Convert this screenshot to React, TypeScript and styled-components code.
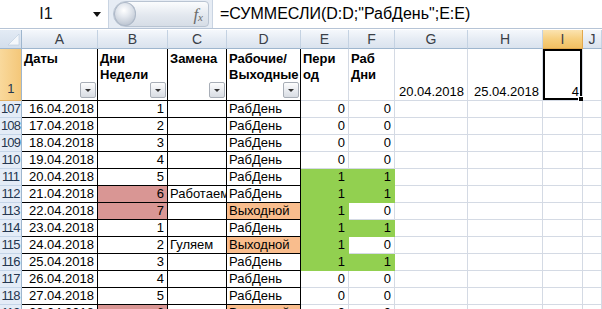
import styled, { createGlobalStyle } from 'styled-components';

const GlobalStyle = createGlobalStyle`
  body { margin: 0; background: #fff; }
`;

type Row = {
  n: number;
  date: string;
  day: number;
  note: string;
  kind: string;
  period: number;
  work: number;
};

const rows: Row[] = [
  { n: 107, date: '16.04.2018', day: 1, note: '', kind: 'РабДень', period: 0, work: 0 },
  { n: 108, date: '17.04.2018', day: 2, note: '', kind: 'РабДень', period: 0, work: 0 },
  { n: 109, date: '18.04.2018', day: 3, note: '', kind: 'РабДень', period: 0, work: 0 },
  { n: 110, date: '19.04.2018', day: 4, note: '', kind: 'РабДень', period: 0, work: 0 },
  { n: 111, date: '20.04.2018', day: 5, note: '', kind: 'РабДень', period: 1, work: 1 },
  { n: 112, date: '21.04.2018', day: 6, note: 'Работаем', kind: 'РабДень', period: 1, work: 1 },
  { n: 113, date: '22.04.2018', day: 7, note: '', kind: 'Выходной', period: 1, work: 0 },
  { n: 114, date: '23.04.2018', day: 1, note: '', kind: 'РабДень', period: 1, work: 1 },
  { n: 115, date: '24.04.2018', day: 2, note: 'Гуляем', kind: 'Выходной', period: 1, work: 0 },
  { n: 116, date: '25.04.2018', day: 3, note: '', kind: 'РабДень', period: 1, work: 1 },
  { n: 117, date: '26.04.2018', day: 4, note: '', kind: 'РабДень', period: 0, work: 0 },
  { n: 118, date: '27.04.2018', day: 5, note: '', kind: 'РабДень', period: 0, work: 0 },
  { n: 119, date: '28.04.2018', day: 6, note: '', kind: 'Выходной', period: 0, work: 0 },
];

const PINK = '#d99694';
const ORANGE = '#f9bd8d';
const GREEN = '#92d050';
const GRID = '#d4dae4';

const letters = ['A', 'B', 'C', 'D', 'E', 'F', 'G', 'H', 'I', 'J'];

export default function App() {
  return (
    <Window>
      <GlobalStyle />
      <FormulaBar>
        <NameBox>
          <span>I1</span>
          <Caret />
        </NameBox>
        <FxPill>
          <Knob />
          <Fx>
            f<sub>x</sub>
          </Fx>
        </FxPill>
        <FormulaInput>=СУММЕСЛИ(D:D;"РабДень";E:E)</FormulaInput>
      </FormulaBar>

      <Sheet>
        <Corner>
          <svg width="21" height="17" viewBox="0 0 21 17">
            <polygon points="19,4 19,15 8,15" fill="#f4f7fb" stroke="#b9c9dc" strokeWidth="0.6" />
          </svg>
        </Corner>
        {letters.map((l) => (
          <ColHead key={l} $selected={l === 'I'}>
            {l}
          </ColHead>
        ))}

        <RowHead $selected $tall>
          1
        </RowHead>
        <Cell $table $top $bold>
          Даты
          <FilterButton />
        </Cell>
        <Cell $table $top $bold>
          Дни
          <br />
          Недели
          <FilterButton />
        </Cell>
        <Cell $table $top $bold>
          Замена
          <FilterButton />
        </Cell>
        <Cell $table $top $bold>
          Рабочие/
          <br />
          Выходные
          <FilterButton />
        </Cell>
        <Cell $top $bold>
          Пери
          <br />
          од
        </Cell>
        <Cell $top $bold>
          Раб
          <br />
          Дни
        </Cell>
        <Cell $right>20.04.2018</Cell>
        <Cell $right>25.04.2018</Cell>
        <Cell $right $active>
          4
          <FillHandle />
        </Cell>
        <Cell />

        {rows.map((r) => (
          <RowLine key={r.n} r={r} />
        ))}
      </Sheet>
    </Window>
  );
}

function RowLine({ r }: { r: Row }) {
  const weekend = r.day >= 6;
  const off = r.kind === 'Выходной';
  return (
    <>
      <RowHead>{r.n}</RowHead>
      <Cell $table $right>{r.date}</Cell>
      <Cell $table $right $fill={weekend ? PINK : undefined}>
        {r.day}
      </Cell>
      <Cell $table>{r.note}</Cell>
      <Cell $table $fill={off ? ORANGE : undefined}>
        {r.kind}
      </Cell>
      <Cell $right $fill={r.period ? GREEN : undefined}>
        {r.period}
      </Cell>
      <Cell $right $fill={r.work ? GREEN : undefined}>
        {r.work}
      </Cell>
      <Cell />
      <Cell />
      <Cell />
      <Cell />
    </>
  );
}

const Window = styled.div`
  width: 602px;
  height: 309px;
  overflow: hidden;
  background: #fff;
  font-family: 'Liberation Sans', Arial, sans-serif;
`;

const FormulaBar = styled.div`
  display: flex;
  align-items: stretch;
  height: 29px;
  background: #e6ecf4;
  border-bottom: 1px solid #b6c4d6;
  box-sizing: border-box;
`;

const NameBox = styled.div`
  position: relative;
  width: 108px;
  background: #fff;
  border-right: 1px solid #c9d4e2;
  font-size: 16px;
  line-height: 28px;
  color: #111;

  span {
    display: block;
    width: 92px;
    text-align: center;
  }
`;

const Caret = styled.div`
  position: absolute;
  right: 7px;
  top: 12px;
  width: 0;
  height: 0;
  border-left: 4px solid transparent;
  border-right: 4px solid transparent;
  border-top: 5px solid #111;
`;

const FxPill = styled.div`
  display: flex;
  align-items: center;
  justify-content: space-between;
  margin: 1px 3px 0 4px;
  width: 96px;
  height: 26px;
  box-sizing: border-box;
  border: 1px solid #b9c4d2;
  border-radius: 13px 4px 4px 13px;
  background: linear-gradient(#fbfcfd, #e3e8ef 55%, #d6dde6);
`;

const Knob = styled.div`
  width: 22px;
  height: 24px;
  border-radius: 50%;
  background: radial-gradient(circle at 45% 35%, #ffffff 0, #e6eaf0 30%, #b9c2cf 80%);
  box-shadow: inset 0 0 0 1px #aeb9c8;
`;

const Fx = styled.span`
  font-family: 'Liberation Serif', serif;
  font-style: italic;
  font-size: 17px;
  color: #6b6b6b;
  margin-right: 5px;
  line-height: 1;

  sub {
    font-size: 11px;
    vertical-align: -1px;
  }
`;

const FormulaInput = styled.div`
  flex: 1;
  background: #fff;
  border-left: 1px solid #c9d4e2;
  padding-left: 7px;
  font-size: 16px;
  line-height: 28px;
  color: #000;
  white-space: nowrap;
  overflow: hidden;
`;

const Sheet = styled.div`
  display: grid;
  grid-template-columns: 22px 76px 70px 59px 74px 48px 46px 73px 75px 40px 1fr;
  grid-template-rows: 19px 52px;
  grid-auto-rows: 17px;
  margin-top: 1px;
`;

const Corner = styled.div`
  background: linear-gradient(#e3ebf5, #d3deec);
  border-right: 1px solid #9eb6ce;
  border-bottom: 1px solid #9eb6ce;
  box-sizing: border-box;

  svg {
    display: block;
  }
`;

const ColHead = styled.div<{ $selected?: boolean }>`
  display: flex;
  align-items: center;
  justify-content: center;
  box-sizing: border-box;
  font-size: 14px;
  color: #3a3f47;
  background: ${(p) =>
    p.$selected
      ? 'linear-gradient(#fbe3b0, #f6cf7f 50%, #f2c063)'
      : 'linear-gradient(#f5f8fc, #e6ecf4 50%, #dae3ee)'};
  border-right: 1px solid ${(p) => (p.$selected ? '#e2a84c' : '#c4d2e2')};
  border-bottom: 1px solid ${(p) => (p.$selected ? '#e2a84c' : '#9eb6ce')};
`;

const RowHead = styled.div<{ $selected?: boolean; $tall?: boolean }>`
  display: flex;
  align-items: flex-end;
  justify-content: center;
  box-sizing: border-box;
  padding-bottom: ${(p) => (p.$tall ? '3px' : '0')};
  font-size: 13px;
  letter-spacing: -0.9px;
  line-height: 16px;
  color: #24364f;
  background: ${(p) => (p.$selected ? 'linear-gradient(90deg, #f9d99c, #f4c779)' : '#e4ecf7')};
  border-right: 1px solid #9eb6ce;
  border-bottom: 1px solid ${(p) => (p.$selected ? '#e2b063' : '#c5d5e8')};
`;

const Cell = styled.div<{
  $table?: boolean;
  $fill?: string;
  $right?: boolean;
  $top?: boolean;
  $bold?: boolean;
  $active?: boolean;
}>`
  position: relative;
  display: flex;
  align-items: ${(p) => (p.$top ? 'flex-start' : 'flex-end')};
  justify-content: ${(p) => (p.$right ? 'flex-end' : 'flex-start')};
  flex-direction: ${(p) => (p.$top ? 'column' : 'row')};
  box-sizing: border-box;
  padding: ${(p) => (p.$top ? '2px 2px 0 2px' : '0 3px 0 2px')};
  font-size: 13px;
  line-height: 16px;
  font-weight: ${(p) => (p.$bold ? 700 : 400)};
  white-space: nowrap;
  overflow: hidden;
  color: #000;
  background: ${(p) => p.$fill ?? '#fff'};
  border-right: 1px solid ${(p) => (p.$table ? '#000' : p.$fill ?? GRID)};
  border-bottom: 1px solid ${(p) => (p.$table ? '#000' : p.$fill ?? GRID)};
  box-shadow: ${(p) => (p.$active ? 'inset 0 0 0 2px #000' : 'none')};
  overflow: ${(p) => (p.$active ? 'visible' : 'hidden')};
`;

const FilterButton = styled.div`
  position: absolute;
  right: 1px;
  bottom: 2px;
  width: 16px;
  height: 16px;
  box-sizing: border-box;
  border: 1px solid #a8aeb7;
  border-radius: 2px;
  background: linear-gradient(#fdfdfd, #e6e9ee 60%, #d9dde3);

  &::after {
    content: '';
    position: absolute;
    left: 4px;
    top: 6px;
    border-left: 3px solid transparent;
    border-right: 3px solid transparent;
    border-top: 3px solid #333;
  }
`;

const FillHandle = styled.div`
  position: absolute;
  right: -3px;
  bottom: -3px;
  width: 5px;
  height: 5px;
  background: #000;
  border: 1px solid #fff;
`;
